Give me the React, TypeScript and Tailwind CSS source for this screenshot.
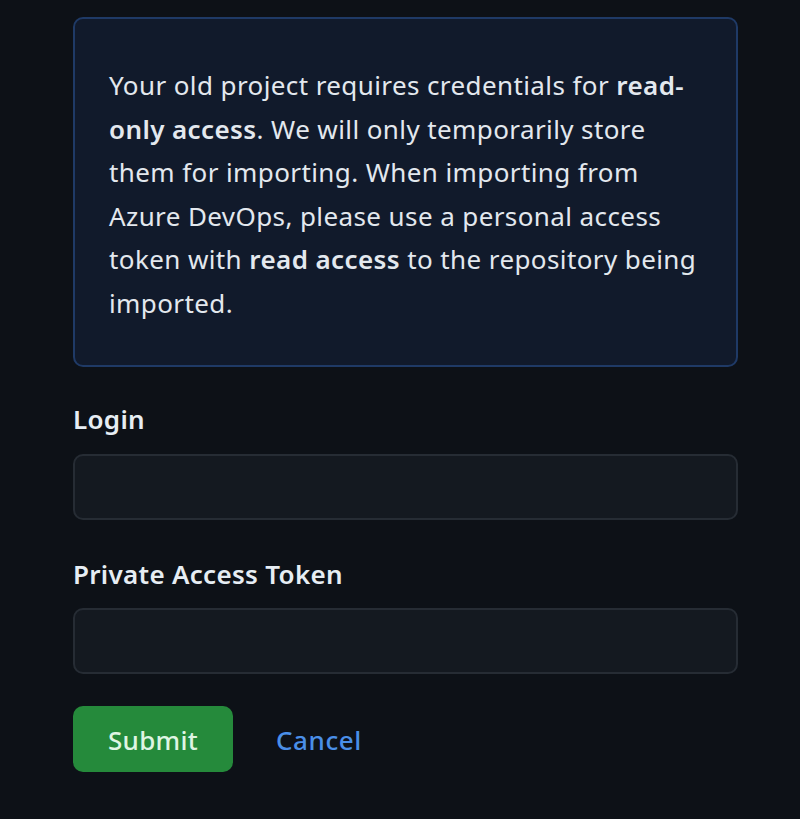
export default function App() {
  const font = { fontFamily: '"Noto Sans", "Open Sans", sans-serif' };
  return (
    <div className="min-h-[819px] w-[800px] bg-[#0d1117] pt-[17px] pl-[73px] text-[#e6edf3]" style={font}>
      <div className="w-[665px] rounded-[10px] border-2 border-[#1f3a66] bg-[#111a2b] pl-[34px] pr-[10px] pt-[45px] pb-[40px]">
        <p className="whitespace-nowrap text-[26px] leading-[43.5px] tracking-[0.4px] text-[#e3e8ee]">
          Your old project requires credentials for <b className="font-semibold">read-</b>
          <br />
          <b className="font-semibold">only access</b>. We will only temporarily store
          <br />
          them for importing. When importing from
          <br />
          Azure DevOps, please use a personal access
          <br />
          token with <b className="font-semibold">read access</b> to the repository being
          <br />
          imported.
        </p>
      </div>
      <div className="w-[665px]">
        <label className="mt-[34px] block text-[26px] font-semibold leading-[36px] tracking-[0.3px]">Login</label>
        <input
          type="text"
          className="mt-[17px] block h-[66px] w-full rounded-[10px] border-2 border-[#262c34] bg-[#141920] outline-none"
        />
        <label className="mt-[36px] block text-[26px] font-semibold leading-[36px] tracking-[0.3px]">
          Private Access Token
        </label>
        <input
          type="text"
          className="mt-[16px] block h-[66px] w-full rounded-[10px] border-2 border-[#262c34] bg-[#141920] outline-none"
        />
        <div className="mt-[32px] flex items-center gap-[43px]">
          <button className="h-[66px] w-[160px] rounded-[10px] bg-[#258a3b] pt-[2px] text-[26px] font-medium tracking-[0.3px] text-[#dff5e3]">
            Submit
          </button>
          <a className="pt-[2px] text-[26px] font-medium tracking-[0.6px] text-[#4a8fe8]">Cancel</a>
        </div>
      </div>
    </div>
  );
}
